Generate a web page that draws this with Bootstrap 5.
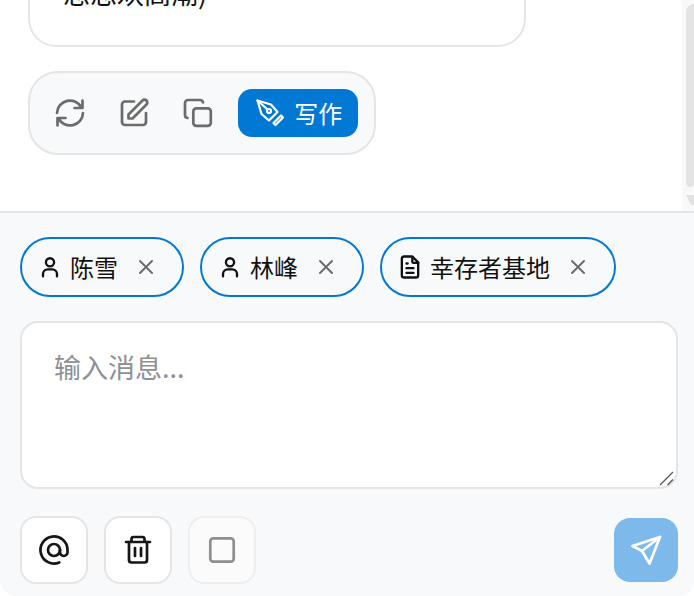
<!DOCTYPE html>
<html lang="zh">
<head>
<meta charset="utf-8">
<link href="https://cdn.jsdelivr.net/npm/bootstrap@5.3.0/dist/css/bootstrap.min.css" rel="stylesheet">
<style>
html,body{height:596px;overflow:hidden;background:#fff;}
body{font-family:"Noto Sans CJK SC",sans-serif;color:#111;}
.chat-shell{height:596px;width:694px;}
.chat-area{height:211px;overflow:hidden;}
.chat-inner{flex:1 1 auto;min-width:0;padding:0 0 0 28px;}
.bubble-tail{width:498px;height:47px;border:2px solid #e5e5e5;border-top:0;border-radius:0 0 28px 28px;overflow:hidden;}
.bubble-text{font-size:27px;line-height:36px;color:#111;margin:-25px 0 0 33px;white-space:nowrap;}
.act-bar{width:348px;height:84px;margin-top:24px;border:2px solid #e5e5e5;border-radius:30px;background:#f8f9fa;padding:0 16px;}
.act-btn{width:48px;height:48px;color:#6c6c6c;margin-right:16px;background:none;border:0;padding:0;}
.write-btn{width:120px;height:48px;margin-left:1px;background:#0078d4;color:#fff;border:0;border-radius:14px;font-size:24px;line-height:1;padding:0;gap:8px;}
.scroll-rail{width:12px;background:#f8f9fa;flex:none;}
.scroll-thumb{width:8px;margin-left:4px;height:183px;margin-top:4px;background:#e4e4e4;border-radius:8px 0 4px 4px;}
.scroll-arrow{width:8px;height:10px;margin:8px 0 0 4px;background:#e2e2e2;clip-path:polygon(0 0,100% 0,100% 100%,60% 100%);}
.composer{height:385px;background:#f8f9fa;border-top:2px solid #e5e5e5;border-radius:0 0 16px 16px;padding:24px 16px 14px 20px;}
.tag-row{gap:16px;}
.tag-pill{height:60px;border:2px solid #0078d4;border-radius:30px;background:#f8f9fa;padding:0 24px 0 14px;font-size:24px;line-height:1;color:#111;}
.tag-x{color:#6c6c6c;margin-left:16px;}
.tag-ico{margin-right:6px;}
.msg-wrap{width:658px;height:168px;margin-top:24px;}
.msg-box{width:658px;height:168px;border:2px solid #e5e5e5;border-radius:18px;background:#fff;font-size:27px;padding:24px 32px;color:#111;box-shadow:none;display:block;resize:none;}
.msg-box::placeholder{color:#8d9095;opacity:1;}
.msg-box:focus{outline:0;box-shadow:none;border-color:#e5e5e5;}
.grip{position:absolute;right:2px;bottom:2px;pointer-events:none;color:#555;}
.foot-row{margin-top:27px;}
.sq-btn{width:68px;height:68px;border:2px solid #e5e5e5;border-radius:16px;background:#fff;color:#161616;padding:0;}
.sq-btn.is-off{border-color:#eeeeee;background:#fbfbfc;color:#8f8f8f;}
.send-btn{width:64px;height:64px;background:#7db9ea;border:0;border-radius:16px;color:#fff;padding:0;margin-top:2px;}
svg{display:block;flex:none;}
</style>
</head>
<body>
<div class="chat-shell d-flex flex-column">
  <div class="chat-area d-flex">
    <div class="chat-inner">
      <div class="bubble-tail"><div class="bubble-text">思思欢高潮)</div></div>
      <div class="act-bar d-flex align-items-center">
        <button class="act-btn d-flex align-items-center justify-content-center" aria-label="刷新"><svg width="32" height="32" viewBox="0 0 32 32" fill="none" stroke="currentColor" stroke-width="2.700" stroke-linecap="round" stroke-linejoin="round"><path d="M3 16A13 13 0 0 1 27.500 10.500M28.500 3.500V11H20.500"/><path d="M29 16A13 13 0 0 1 4.500 21.500M3.500 28.500V21H11.500"/></svg></button>
        <button class="act-btn d-flex align-items-center justify-content-center" aria-label="编辑"><svg width="32" height="32" viewBox="0 0 32 32" fill="none" stroke="currentColor" stroke-width="2.700" stroke-linecap="round" stroke-linejoin="round"><path d="M16 4.500H7a3 3 0 0 0-3 3V25a3 3 0 0 0 3 3H25a3 3 0 0 0 3-3V16"/><path d="M10.500 21.500V17.500L24.500 3.500a2.800 2.800 0 0 1 4 4L14.500 21.500Z"/></svg></button>
        <button class="act-btn d-flex align-items-center justify-content-center" aria-label="复制"><svg width="32" height="32" viewBox="0 0 32 32" fill="none" stroke="currentColor" stroke-width="2.700" stroke-linecap="round" stroke-linejoin="round"><rect x="11.300" y="11.300" width="17.500" height="17.500" rx="3"/><path d="M5.500 21A3 3 0 0 1 3 18V6a3 3 0 0 1 3-3H18a3 3 0 0 1 3 2.500"/></svg></button>
        <button class="write-btn d-flex align-items-center justify-content-center"><svg width="32" height="32" viewBox="0 0 32 32" fill="none" stroke="currentColor" stroke-width="2.200" stroke-linecap="round" stroke-linejoin="round"><path d="M3.500 3.500L17 7.500L23.500 15L15 23.500L7.500 17Z"/><path d="M3.500 3.500L13.500 12.500"/><circle cx="15" cy="14" r="2"/><path d="M19.500 26L27 18.500L29 20.500L21.500 28Z"/></svg><span>写作</span></button>
      </div>
    </div>
    <div class="scroll-rail"><div class="scroll-thumb"></div><div class="scroll-arrow"></div></div>
  </div>
  <div class="composer">
    <div class="tag-row d-flex">
      <div class="tag-pill d-flex align-items-center"><svg class="tag-ico" width="28" height="28" viewBox="0 0 24 24" fill="none" stroke="currentColor" stroke-width="2" stroke-linecap="round" stroke-linejoin="round"><circle cx="12" cy="8" r="3.500"/><path d="M6 20v-2a4 4 0 0 1 4-4h4a4 4 0 0 1 4 4v2"/></svg><span>陈雪</span><svg class="tag-x" width="24" height="24" viewBox="0 0 24 24" fill="none" stroke="currentColor" stroke-width="2" stroke-linecap="round"><path d="M18 6 6 18M6 6l12 12"/></svg></div>
      <div class="tag-pill d-flex align-items-center"><svg class="tag-ico" width="28" height="28" viewBox="0 0 24 24" fill="none" stroke="currentColor" stroke-width="2" stroke-linecap="round" stroke-linejoin="round"><circle cx="12" cy="8" r="3.500"/><path d="M6 20v-2a4 4 0 0 1 4-4h4a4 4 0 0 1 4 4v2"/></svg><span>林峰</span><svg class="tag-x" width="24" height="24" viewBox="0 0 24 24" fill="none" stroke="currentColor" stroke-width="2" stroke-linecap="round"><path d="M18 6 6 18M6 6l12 12"/></svg></div>
      <div class="tag-pill d-flex align-items-center"><svg class="tag-ico" width="28" height="28" viewBox="0 0 24 24" fill="none" stroke="currentColor" stroke-width="2" stroke-linecap="round" stroke-linejoin="round"><path d="M14 3.500v4a1 1 0 0 0 1 1h4"/><path d="M17 21H7a2 2 0 0 1-2-2V5a2 2 0 0 1 2-2h7l5 5v11a2 2 0 0 1-2 2z"/><path d="M9 9h1M9 13h6M9 17h6"/></svg><span>幸存者基地</span><svg class="tag-x" width="24" height="24" viewBox="0 0 24 24" fill="none" stroke="currentColor" stroke-width="2" stroke-linecap="round"><path d="M18 6 6 18M6 6l12 12"/></svg></div>
    </div>
    <div class="msg-wrap position-relative">
      <textarea class="form-control msg-box" placeholder="输入消息..."></textarea>
      <svg class="grip" width="18" height="18" viewBox="0 0 18 18" fill="none" stroke="currentColor" stroke-width="1.300"><path d="M2 16 15 3M9.500 16 15 10.500"/></svg>
    </div>
    <div class="foot-row d-flex justify-content-between align-items-start">
      <div class="d-flex gap-3">
        <button class="sq-btn d-flex align-items-center justify-content-center" aria-label="提及"><svg width="36" height="36" viewBox="0 0 24 24" fill="none" stroke="currentColor" stroke-width="1.800" stroke-linecap="round" stroke-linejoin="round"><circle cx="12" cy="12" r="4"/><path d="M16 12v1.500a2.500 2.500 0 0 0 5 0V12a9 9 0 1 0-5.500 8.280"/></svg></button>
        <button class="sq-btn d-flex align-items-center justify-content-center" aria-label="删除"><svg width="36" height="36" viewBox="0 0 36 36" fill="none" stroke="currentColor" stroke-width="2.700" stroke-linecap="round" stroke-linejoin="round"><path d="M6 10H30"/><path d="M11.500 9.500V7a2 2 0 0 1 2-2h9a2 2 0 0 1 2 2v2.500"/><path d="M9 10V28a2.500 2.500 0 0 0 2.500 2.500h13a2.500 2.500 0 0 0 2.500-2.500V10"/><path d="M15 16V24M21 16V24"/></svg></button>
        <button class="sq-btn is-off d-flex align-items-center justify-content-center" aria-label="停止"><svg width="36" height="36" viewBox="0 0 36 36" fill="none" stroke="currentColor" stroke-width="2.700" stroke-linejoin="round"><rect x="6.300" y="6.300" width="23.400" height="23.400" rx="3"/></svg></button>
      </div>
      <button class="send-btn d-flex align-items-center justify-content-center" aria-label="发送"><svg width="36" height="36" viewBox="0 0 36 36" fill="none" stroke="currentColor" stroke-width="2.700" stroke-linecap="round" stroke-linejoin="round"><path d="M32 5L4.500 14L14 19L21.500 31.500Z"/><path d="M14 19L32 5"/></svg></button>
    </div>
  </div>
</div>
<script src="https://cdn.jsdelivr.net/npm/bootstrap@5.3.0/dist/js/bootstrap.bundle.min.js"></script>
</body>
</html>
